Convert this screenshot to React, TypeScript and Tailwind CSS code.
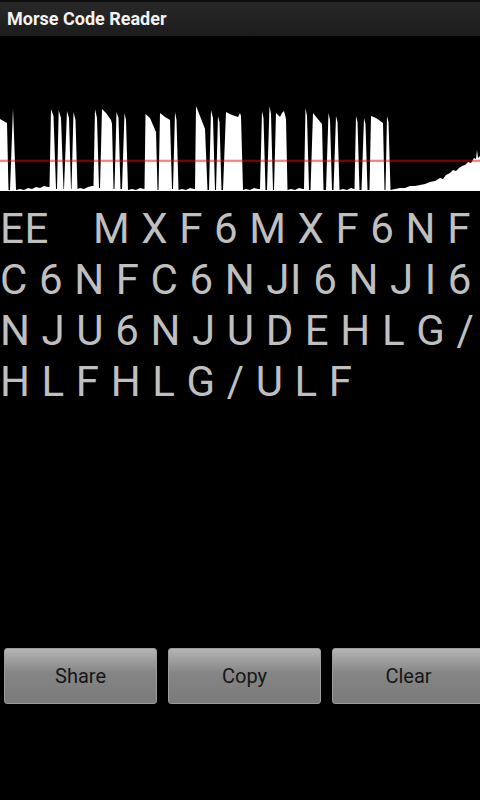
import React from "react";

// waveform outline, in page coordinates (x 0-480, y 36-203)
const wave: [number, number][] = [
  [0, 191], [0, 119], [7, 123], [8.5, 190], [10, 190], [13, 108], [16, 190],
  [20, 189], [24, 190], [28, 188], [32, 189], [36, 187], [40, 188], [44, 186], [48, 187],
  [49.5, 187], [51, 109], [53.5, 116], [56, 189],
  [57, 189], [58.7, 110], [61, 118], [63.5, 189],
  [64, 189], [67, 111], [69, 118], [71, 189],
  [71.5, 189], [73.5, 112], [75.5, 120], [77.5, 189],
  [80, 188], [84, 189], [88, 187], [92, 186],
  [93.5, 186], [95, 109], [97, 118], [99, 188],
  [100, 188], [102, 109], [106, 113], [111, 120], [112, 124], [113.5, 189],
  [114.5, 189], [116.5, 112], [118.5, 118], [120.5, 189],
  [122, 189], [124.5, 113], [126, 120], [128, 190],
  [132, 189], [136, 190], [140, 188], [144, 189],
  [144.5, 189], [145.5, 114], [150, 118], [153, 125], [156, 132], [157.5, 190],
  [158.5, 190], [160, 113], [165, 117], [170, 120], [172, 189],
  [173, 189], [175, 112], [176.5, 120], [178.5, 190],
  [182, 189], [186, 190], [190, 188], [194, 189],
  [195, 189], [196, 106], [200, 116], [205, 129], [207.5, 190],
  [209, 190], [211, 110], [213, 118], [215, 190],
  [216, 190], [218, 116], [219.5, 122], [221.5, 190],
  [223, 190], [226, 112], [232, 115], [238, 117], [240, 113], [241, 116], [243, 190],
  [246, 189], [250, 190], [254, 188], [258, 189],
  [260, 189], [262, 111], [263.5, 118], [265.5, 190],
  [267, 190], [269.5, 106], [271, 114], [273, 190],
  [274, 190], [276, 113], [280, 117], [282, 113], [284, 111], [286, 119], [287.5, 190],
  [291, 189], [295, 190], [299, 188], [303, 189],
  [304, 189], [305.5, 108], [307, 116], [309, 190],
  [310.5, 190], [313, 113], [317, 118], [322, 124], [323.5, 190],
  [326, 190], [328.5, 113], [330, 120], [332, 190],
  [333.5, 190], [336, 116], [337.5, 122], [339.5, 190],
  [343, 189], [347, 190], [351, 188], [354, 189],
  [354.5, 189], [356, 116], [357.5, 122], [359.5, 190],
  [361.5, 190], [364, 118], [365.5, 124], [367.5, 190],
  [369.5, 190], [371, 116], [376, 118], [383, 123], [384.5, 190],
  [385.5, 190], [387, 116], [388.5, 122], [390.5, 190],
  [395, 189], [400, 188], [405, 188], [410, 186], [415, 186], [420, 185], [425, 184],
  [430, 182], [435, 181], [440, 178], [443, 179], [446, 175], [450, 173], [453, 170],
  [456, 171], [459, 168], [462, 166], [465, 165], [468, 162], [471, 163], [474, 158],
  [476, 159], [477, 150], [478, 158], [480, 156], [480, 191],
];

const decoded =
  "EE    M X F 6 M X F 6 N F C 6 N F C 6 N JI 6 N J I 6 N J U 6 N J U D E H L G / H L F H L G / U L F";

const buttons = ["Share", "Copy", "Clear"];

const App = () => {
  return (
    <div
      className="w-[480px] h-[800px] bg-black flex flex-col overflow-hidden"
      style={{ fontFamily: "Roboto, 'Noto Sans', sans-serif" }}
    >
      {/* TITLE BAR */}
      <div className="h-[36px] shrink-0 border-t-[2px] border-[#0e0e0e] bg-gradient-to-b from-[#282828] to-[#1c1c1c] flex items-center pl-[7px]">
        <span className="text-[18px] font-bold text-[#f2f2f2] leading-none">Morse Code Reader</span>
      </div>

      {/* WAVEFORM */}
      <svg className="block shrink-0" width={480} height={167} viewBox="0 36 480 167">
        <polygon points={wave.map((p) => p.join(",")).join(" ")} fill="#ffffff" />
        <rect x={0} y={159.7} width={480} height={2.2} fill="rgba(255,0,0,0.5)" />
      </svg>

      {/* DECODED TEXT */}
      <div className="flex-1 overflow-hidden text-[42px] leading-[51px] text-[#bfbfbf] whitespace-pre-wrap tracking-[0.6px]">
        {decoded}
      </div>

      {/* BUTTONS */}
      <div className="flex gap-[11px] pl-[4px] mb-[96px] shrink-0">
        {buttons.map((label) => (
          <button
            key={label}
            className="w-[153px] h-[56px] shrink-0 rounded-[3px] border border-[#9c9c9c] bg-gradient-to-b from-[#b5b5b5] via-[#858585] via-45% to-[#7b7b7b] text-[20px] text-[#161616]"
          >
            {label}
          </button>
        ))}
      </div>
    </div>
  );
};

export default App;
